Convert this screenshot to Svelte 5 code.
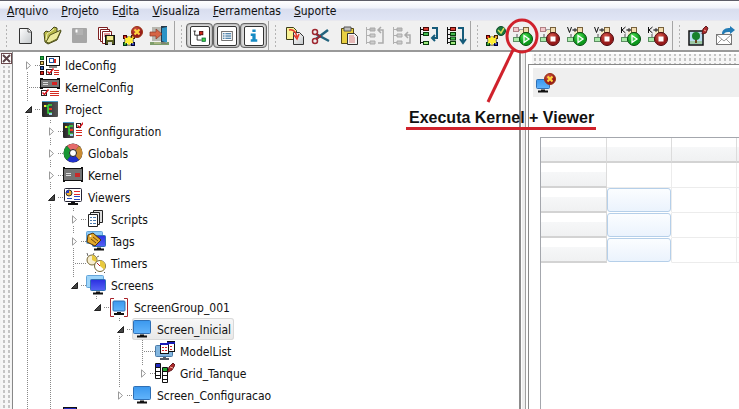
<script>
    const menus = ['Arquivo', 'Projeto', 'Edita', 'Visualiza', 'Ferramentas', 'Suporte'];
    // position of the access key inside each menu title
    const accessKeys = [0, 0, 1, 0, 0, 0];

    const toolGroups = [
        ['new', 'open', 'save', 'saveAll', 'configure', 'exit'],
        ['treeView', 'listView', 'info'],
        ['copy', 'cut', 'paste', 'moveUp', 'moveOut', 'moveIn', 'moveDown'],
        ['verify', 'runAll', 'stopAll', 'runViewer', 'stopViewer', 'runKernel', 'stopKernel'],
        ['editImage', 'send'],
    ];

    let pressed = $state({ treeView: true, listView: true, info: true });
    let selected = $state('Screen_Inicial');

    let tree = $state([
        { name: 'IdeConfig', icon: 'ideConfig', open: false, children: [] },
        { name: 'KernelConfig', icon: 'kernelConfig' },
        { name: 'Project', icon: 'project', open: true, children: [
            { name: 'Configuration', icon: 'configuration', open: false, children: [] },
            { name: 'Globals', icon: 'globals', open: false, children: [] },
            { name: 'Kernel', icon: 'kernel', open: false, children: [] },
            { name: 'Viewers', icon: 'viewers', open: true, children: [
                { name: 'Scripts', icon: 'scripts', open: false, children: [] },
                { name: 'Tags', icon: 'tags', open: false, children: [] },
                { name: 'Timers', icon: 'timers' },
                { name: 'Screens', icon: 'screens', open: true, children: [
                    { name: 'ScreenGroup_001', icon: 'group', open: true, children: [
                        { name: 'Screen_Inicial', icon: 'screen', open: true, children: [
                            { name: 'ModelList', icon: 'modelList' },
                            { name: 'Grid_Tanque', icon: 'grid', open: false, children: [] },
                        ] },
                        { name: 'Screen_Configuracao', icon: 'screen', open: false, children: [] },
                    ] },
                ] },
            ] },
            { name: '', icon: 'database' },
        ] },
        { name: '', icon: 'database' },
    ]);

    const gridRows = [false, true, true, true];

    function togglePressed(name) {
        if (name in pressed) pressed[name] = !pressed[name];
    }
</script>

{#snippet monitor(x, y, w, h, fill)}
    <rect {x} {y} width={w} height={h} rx="1" {fill} stroke="#2f6fb4" />
    <path d="M{x + w / 2 - 2} {y + h + 1}h4v1h3v2h-10v-2h3z" fill="#111" />
{/snippet}

{#snippet badge(x, y)}
    <circle cx={x} cy={y} r="5.5" fill="url(#red)" stroke="#9c3413" />
    <path d="M{x - 2.5} {y - 2.5}l5 5m0-5l-5 5" stroke="#ffd83c" stroke-width="2" />
{/snippet}

{#snippet star()}
    <path d="M3 12h8v8H3z" fill="none" stroke="#222" />
    <rect x="1.5" y="10.5" width="3" height="3" fill="#e32219" stroke="#400" />
    <rect x="9.5" y="10.5" width="3" height="3" fill="#e09a35" stroke="#420" />
    <rect x="1.5" y="17.5" width="3" height="3" fill="#2b9b37" stroke="#031" />
    <rect x="9.5" y="17.5" width="3" height="3" fill="#2638c5" stroke="#003" />
    <path d="M7 10.500l1.500 2.500 3-.5-1 3 1 3-3-.5-1.500 2.500-1.500-2.500-3 .5 1-3-1-3 3 .5z" fill="#ffee32" />
{/snippet}

{#snippet checkbox(x, y, size)}
    <rect {x} {y} width={size} height={size} fill="#fff" stroke="#222" />
    <path d="M{x + 1} {y + 2}l2 2 4-5" fill="none" stroke="#d8141c" stroke-width="1.5" />
{/snippet}

{#snippet board(x, y, w, h)}
    <rect {x} {y} width={w} height={h} rx="1" fill="url(#dark)" />
    <path d="M{x} {y + .5}h{w}" stroke="#4c9bc8" />
    <path d="M{x + 2} {y + 5}h4v7h4m-4-4h3m-3-4h4" fill="none" stroke="#38dc3a" stroke-width="1.5" />
    <path d="M{x + 2} {y + 4}h2v2h-2z" fill="#f6e940" />
    <path d="M{x + 7} {y + 7}h3v2h-3z" fill="#ed3c23" />
    <path d="M{x + 7} {y + 12}h3v2h-3z" fill="#9cd2ee" />
{/snippet}

{#snippet runIcon(letter, stop)}
    <path d="M6 5h7M5 9v5m9-7v6" stroke="#555" fill="none" />
    {#if letter}
        <path d="M8 6h6v8H8z" fill="#f7ecc4" />
        {#if letter === 'V'}
            <path d="M1.500 2l2 5.500 2-5.500" fill="none" stroke="#111" />
        {:else}
            <path d="M1.500 2v6m4-6l-3.500 3 3.500 3" fill="none" stroke="#111" />
        {/if}
        <path d="M7 5h4m-2-2v4" stroke="#333" />
    {:else}
        <rect x="1.5" y="2.5" width="5" height="4" fill="#f3c7cb" stroke="#b07f83" />
        <path d="M8 5h5v9H8z" fill="#f7ecc4" />
    {/if}
    <rect x="11.5" y="2.5" width="5" height="5" fill="#f2dcae" stroke="#76603a" />
    <rect x="1.5" y="12.5" width="6" height="4" fill="#a9eaa9" stroke="#5b8f62" />
    {#if stop}
        <circle cx="14" cy="14" r="6.5" fill="url(#red)" stroke="#4d0a10" />
        <path d="M11.500 11.500h5v5h-5z" fill="#fff" />
    {:else}
        <circle cx="14" cy="14" r="6.5" fill="url(#green)" stroke="#064e10" />
        <path d="M12 10.500l5 3.500-5 3.500z" fill="#41d34b" stroke="#fff" stroke-width="1.3" />
    {/if}
{/snippet}

{#snippet toolIcon(name)}
    <svg width="22" height="22" viewBox="0 0 22 22" aria-hidden="true">
        {#if name === 'new'}
            <path d="M5.500 3.500h9l3 3v12h-12z" fill="url(#paper)" stroke="#333" />
            <path d="M14 3.500v3.500h3.500" fill="#fff" stroke="#555" />
        {:else if name === 'open'}
            <path d="M4 17l-1-9 2-2 3 1 5-5 3 1v4l4-1-4 9-9 4z" fill="#b9ba4a" stroke="#454718" />
            <path d="M5 17l4-7 11-5-4 9-8 4z" fill="#ecea9b" stroke="#55571c" />
            <path d="M5 15l1-6 7-5" fill="none" stroke="#f5f3ba" />
        {:else if name === 'save'}
            <rect x="4" y="3" width="15" height="15" rx="1" fill="#a6a6a6" />
            <path d="M8 4h7v6H8z" fill="#b2b2b2" />
            <path d="M8.500 4.500v3" stroke="#fff" stroke-width="2" />
        {:else if name === 'saveAll'}
            <path d="M3.500 2.500h9v12h-9z" fill="#fff" stroke="#7e2020" />
            <path d="M5.500 4.500h9v12h-9z" fill="#fff" stroke="#7e2020" />
            <path d="M7.500 6.500h9v12h-9z" fill="#fff" stroke="#7e2020" />
            <path d="M9 9h6m-6 2h4" stroke="#c33" />
            <rect x="10.5" y="10.5" width="9" height="9" fill="#555a20" stroke="#111" />
            <path d="M12 11h6v4h-6z" fill="#f1e98c" />
            <path d="M13 17h4v3h-4z" fill="#ddd" />
        {:else if name === 'configure'}
            {@render star()}
            {@render badge(15, 7)}
        {:else if name === 'exit'}
            <path d="M1 17h19v3H1z" fill="#7d9d6b" />
            <path d="M3 2h9v14H3z" fill="#b7b7b0" />
            <path d="M12 1h6v18h-6z" fill="#273848" />
            <path d="M13 3l5-1v16l-5-2z" fill="#2b93c6" />
            <path d="M1 7h6V4l6 5-6 5v-3H1z" fill="#d66445" stroke="#8c3a29" stroke-width=".7" />
            <path d="M5 18h13" stroke="#d3d09a" />
        {:else if name === 'treeView'}
            <path d="M4.500 5v5H12M7.500 10v6H13" fill="none" stroke="#111" />
            <path d="M3 5h3" stroke="#111" />
            <rect x="10.5" y="5.5" width="4" height="4" fill="#cf2318" stroke="#400" />
            <rect x="13.5" y="13.5" width="4" height="4" fill="#45d544" stroke="#063" />
        {:else if name === 'listView'}
            <rect x="4.5" y="5.5" width="13" height="11" fill="#fff" stroke="#555" />
            <path d="M6 8h2m-2 2h2m-2 2h2m-2 2h2M9 8h7m-7 2h7m-7 2h7m-7 2h7" stroke="#286899" />
        {:else if name === 'info'}
            <path d="M9 3h4v3H9zM7 8h6v7h2v3H7v-3h2v-4H7z" fill="#168bc4" />
        {:else if name === 'copy'}
            <path d="M3.500 2.500h7l3 3v9h-10z" fill="#f9f295" stroke="#3e3d18" />
            <path d="M10.500 7.500h6l4 4v8h-10z" fill="url(#paper)" stroke="#333" />
            <path d="M6 5c5-1 7 2 8 7m-3-2l3 4 2-5" fill="none" stroke="#e3392c" stroke-width="1.5" />
        {:else if name === 'cut'}
            <path d="M6 9l13 7M6 14L18 5" stroke="#22637d" stroke-width="2.5" />
            <path d="M6 9l5 3M6 14l5-3" stroke="#9e2730" stroke-width="1.5" />
            <circle cx="5" cy="7" r="2.5" fill="none" stroke="#9e2730" stroke-width="1.5" />
            <circle cx="5" cy="16" r="2.5" fill="none" stroke="#9e2730" stroke-width="1.5" />
        {:else if name === 'paste'}
            <path d="M4.500 3.500h12v15h-12z" fill="#e8cf42" stroke="#554913" />
            <path d="M7 2h7v4H7z" fill="#bdbdbd" stroke="#555" />
            <path d="M10.500 8.500h7l3 3v8h-10z" fill="#f4f4f4" stroke="#333" />
            <path d="M12 11h5m-5 2h6m-6 2h6m-6 2h6" stroke="#d77d7b" />
        {:else if name === 'moveUp' || name === 'moveOut'}
            <path d="M2.500 2v17M3 4.500h3m-3 6h3m-3 7h3" stroke="#b0b0b0" fill="none" />
            <path d="M6 3h5v3H6z" fill="#bbb" stroke="#aaa" />
            <path d="M6 9h5v3H6zM6 16h5v3H6z" fill="#ccc" stroke="#aaa" />
            {#if name === 'moveUp'}
                <path d="M14 18h5V5h-4m2-3l-3 3 3 3" fill="none" stroke="#aaa" stroke-width="1.5" />
            {:else}
                <path d="M15 18h4v-8h-4m2-3l-3 3 3 3" fill="none" stroke="#aaa" stroke-width="1.5" />
            {/if}
        {:else if name === 'moveIn' || name === 'moveDown'}
            <path d="M2.500 2v17M3 4.500h3m-3 5h3m-3 8h3" stroke="#111" fill="none" />
            <rect x="5.5" y="2.5" width="5" height="3" fill="#d63a30" stroke="#4a0805" />
            <rect x="5.5" y="7.500" width="5" height="3" fill="#43b94e" stroke="#063d0a" />
            {#if name === 'moveDown'}
                <path d="M3 13.500h3" stroke="#111" />
                <rect x="5.5" y="12" width="5" height="3" fill="#43b94e" stroke="#063d0a" />
            {/if}
            <rect x="5.5" y="16.5" width="5" height="3" fill="#a0e87d" stroke="#063d0a" />
            <path d={name === 'moveIn' ? 'M14 3h5v10h-4m2-3l-3 3 3 3' : 'M13 3h5v14m-3-3l3 4 3-4'} fill="none" stroke="#155b7a" stroke-width="2" />
        {:else if name === 'verify'}
            {@render star()}
            <circle cx="16" cy="6" r="4.5" fill="#19763b" stroke="#0c4b29" />
            <path d="M13 5l3 3 3-5" fill="none" stroke="#d7df5c" stroke-width="1.5" />
        {:else if name === 'runAll'}
            {@render runIcon('', false)}
        {:else if name === 'stopAll'}
            {@render runIcon('', true)}
        {:else if name === 'runViewer'}
            {@render runIcon('V', false)}
        {:else if name === 'stopViewer'}
            {@render runIcon('V', true)}
        {:else if name === 'runKernel'}
            {@render runIcon('K', false)}
        {:else if name === 'stopKernel'}
            {@render runIcon('K', true)}
        {:else if name === 'editImage'}
            <rect x="2" y="6" width="14" height="14" fill="#b8dcf0" stroke="#111" stroke-width="1.5" />
            <path d="M3 16h12v3H3z" fill="#9cc9a4" />
            <path d="M8 12h2v6H8z" fill="#67451d" />
            <circle cx="9" cy="11" r="4" fill="#16812c" />
            <path d="M15 9l1-5 3-3 2 2-2 5z" fill="#ad2b2c" stroke="#631c20" />
            <path d="M17 5l2 1" stroke="#f0b0a0" />
        {:else if name === 'send'}
            <rect x="2.5" y="9.5" width="15" height="10" fill="#fff" stroke="#777" />
            <path d="M3 10l7 6 7-6M3 19l5-5m9 5l-5-5" fill="none" stroke="#999" />
            <path d="M8 9c0-5 4-6 8-6V1l5 4-5 4V7c-3 0-5 0-6 2z" fill="#247cb5" />
        {/if}
    </svg>
{/snippet}

{#snippet treeIcon(name)}
    <svg width="20" height="22" viewBox="0 0 20 22" aria-hidden="true">
        {#if name === 'ideConfig'}
            <rect x=".5" y="2.5" width="3" height="3" fill="#2aa636" stroke="#062" />
            <rect x=".5" y="7.5" width="3" height="3" fill="#e2c765" stroke="#431" />
            <rect x=".5" y="12.5" width="3" height="3" fill="#3a60b0" stroke="#013" />
            <rect x=".5" y="17.5" width="3" height="3" fill="#d32a20" stroke="#400" />
            <rect x="6.5" y="2.5" width="13" height="9" fill="#fff" stroke="#111" />
            <rect x="9.5" y="4.5" width="4" height="4" fill="#fff" stroke="#2355a0" />
            <path d="M14 5h2v4h-2z" fill="#d32a20" />
            <path d="M9 13h8" stroke="#111" />
            {@render checkbox(6.5, 15.5, 5)}
            <path d="M14 16.500h5m-5 2h5m-5 2h5" stroke="#d32a20" />
        {:else if name === 'kernelConfig'}
            <rect x=".5" y="3.5" width="19" height="8" fill="#777" stroke="#111" />
            <path d="M0 3h3M0 12h3m14-9h3m-3 9h3" stroke="#111" stroke-width="2" />
            <path d="M3 6.500h5m-5 2h5" stroke="#ddd" />
            <path d="M12 6h5v3h-5z" fill="#d42222" />
            {@render checkbox(1.5, 14.5, 5)}
            <path d="M10 15.500h9m-9 2h9m-9 2h9" stroke="#d32a20" />
        {:else if name === 'project'}
            {@render board(2, 3, 16, 16)}
        {:else if name === 'configuration'}
            {@render board(0, 2, 11, 16)}
            {@render checkbox(13.5, 3.5, 4)}
            <path d="M13 10.500h6m-6 2h6m-6 3h6" stroke="#d32a20" />
        {:else if name === 'globals'}
            <circle cx="10" cy="11" r="9.5" fill="#222" />
            <path d="M10 11L4 4a9 9 0 0 1 12 0z" fill="#e56b6b" />
            <path d="M10 11l6-7a9 9 0 0 1 0 14z" fill="#c98b32" />
            <path d="M10 11l6 7a9 9 0 0 1-12 0z" fill="#2030cd" />
            <path d="M10 11l-6 7a9 9 0 0 1 0-14z" fill="#189634" />
            <circle cx="10" cy="11" r="3.5" fill="#fff" stroke="#222" />
        {:else if name === 'kernel'}
            <rect x=".5" y="4.5" width="19" height="12" fill="#747474" stroke="#111" />
            <path d="M0 4h2m-2 13h2M18 4h2m-2 13h2" stroke="#111" stroke-width="2" />
            <path d="M3 9.500h5m-5 2h5" stroke="#ddd" />
            <path d="M12 9h5v4h-5z" fill="#c72a2a" />
        {:else if name === 'viewers'}
            <rect x="1.5" y="2.5" width="17" height="13" rx="1" fill="#fff" stroke="#223" />
            <circle cx="6" cy="7" r="3" fill="#f0ae36" stroke="#333" />
            <path d="M6 7V4a3 3 0 0 0-3 3z" fill="#213bc7" />
            <path d="M11 5.500h6m-6 3h6" stroke="#e32a32" />
            <path d="M4 12.500h5m2-2h6m-6 3h6" stroke="#2748c4" />
            <path d="M8 16h4v1h3v2H5v-2h3z" fill="#111" />
        {:else if name === 'scripts'}
            <path d="M7.500 2.500h9v12h-9z" fill="#ddd" stroke="#222" />
            <path d="M4.500 4.500h9v12h-9z" fill="#eee" stroke="#222" />
            <path d="M2.500 6.500h9v12h-9z" fill="#fff" stroke="#222" />
            <path d="M4 9.500h2m1 0h3m-6 3h2m1 0h3m-6 3h2m1 0h3" stroke="#4a7aad" />
        {:else if name === 'tags'}
            <rect x=".5" y="1.5" width="16" height="12" rx="1" fill="#8dcbf8" stroke="#64a5d9" />
            {@render monitor(6.5, 5.5, 13, 11, 'url(#blue)')}
            <path d="M1 12l1-7 5-2 8 7-6 6z" fill="#e3a92d" stroke="#513309" />
            <path d="M5 9l5 4m-3-6l5 4" stroke="#71480c" />
            <circle cx="4.5" cy="6" r="1" fill="#fff" />
        {:else if name === 'timers'}
            <circle cx="6" cy="8" r="5" fill="#f6edcf" stroke="#776735" />
            <path d="M6 8V3a5 5 0 0 1 4 7z" fill="#e8c93d" />
            <path d="M2 4L1 1m6 2l1-2m3 4l2-1" stroke="#666" />
            <circle cx="14" cy="14" r="5.5" fill="#fff" stroke="#776735" />
            <path d="M14 14V8.500a5.500 5.500 0 0 1 4 9z" fill="#e8c93d" />
            <path d="M14 14l-3-3" stroke="#b22" />
            <path d="M10 20l-1 1m9-1l1 1" stroke="#555" />
        {:else if name === 'screens'}
            <rect x=".5" y="1.5" width="17" height="12" rx="1" fill="#9ed5fa" stroke="#64a5d9" />
            {@render monitor(4.5, 5.5, 15, 11, 'url(#blue)')}
        {:else if name === 'group'}
            <path d="M5 2.500H1.500v18H5M15 2.500h3.500v18H15" fill="none" stroke="#a9232a" />
            {@render monitor(4, 5, 12, 10, 'url(#sky)')}
        {:else if name === 'screen'}
            {@render monitor(1.5, 2.5, 17, 13, 'url(#sky)')}
        {:else if name === 'modelList'}
            <rect x=".5" y="5.5" width="17" height="11" rx="1" fill="#83b6df" stroke="#497aa9" />
            <path d="M8 17h3v1h3v2H5v-2h3z" fill="#555b65" />
            <rect x="12.5" y="1.5" width="7" height="10" fill="#fff" stroke="#111" />
            <path d="M12 2h8v2h-8z" fill="#1b1bb7" />
            <rect x="5.5" y="3.5" width="8" height="10" fill="#fff" stroke="#111" />
            <path d="M5 3h9v2H5z" fill="#1b1bb7" />
            <path d="M7 7.500h5m-5 3h5m3-4h3m-3 3h3" stroke="#d5252a" stroke-dasharray="2 1" />
        {:else if name === 'grid'}
            <path d="M.5 1.500h5v15h-5zM7.500 5.500h5v15h-5z" fill="#fff" stroke="#111" />
            <path d="M1 2h4v3H1z" fill="#2029be" />
            <path d="M8 6h4v3H8z" fill="#23a52f" />
            <path d="M1 5.500h5m-5 4h5m-5 4h5m2-4h5m-5 4h5m-5 4h5" stroke="#111" />
            <path d="M13 10l1-5 4-4 2 2-3 5z" fill="#ad2b2c" stroke="#631c20" />
            <path d="M15 5l3 1" stroke="#f0b0a0" />
        {:else if name === 'database'}
            <rect x=".5" y="1.5" width="13" height="16" fill="#1e27bd" stroke="#111" />
        {/if}
    </svg>
{/snippet}

{#snippet branch(nodes, guides)}
    <ul>
        {#each nodes as node, i}
            {@const last = i === nodes.length - 1}
            <li>
                <div class="row">
                    {#each guides as guide}
                        <span class="cell" class:guide></span>
                    {/each}
                    {#if node.children}
                        <button
                            class="cell expander"
                            class:first={i === 0 && guides.length === 0}
                            class:last
                            aria-label="Expand {node.name}"
                            aria-expanded={node.open}
                            onclick={() => node.open = !node.open}
                        >
                            <svg width="7" height="9" viewBox="0 0 7 9" aria-hidden="true">
                                {#if node.open}
                                    <path d="M6.500 1.500v6h-6z" fill="#444" stroke="#222" />
                                {:else}
                                    <path d="M1.500 .8v7.400l4-3.700z" fill="#fff" stroke="#999" />
                                {/if}
                            </svg>
                        </button>
                    {:else}
                        <span class="cell leaf" class:last></span>
                    {/if}
                    <button
                        class="item"
                        class:selected={node.name === selected}
                        aria-label={node.name || 'Item'}
                        onclick={() => selected = node.name}
                    >
                        {@render treeIcon(node.icon)}
                        <span>{node.name}</span>
                    </button>
                </div>
                {#if node.open && node.children.length}
                    {@render branch(node.children, [...guides, !last])}
                {/if}
            </li>
        {/each}
    </ul>
{/snippet}

<svg class="defs" width="0" height="0" aria-hidden="true">
    <defs>
        <linearGradient id="paper" x2="1" y2="1"><stop stop-color="#fff" /><stop offset="1" stop-color="#c3c7ca" /></linearGradient>
        <linearGradient id="sky" x2="0" y2="1"><stop stop-color="#3b98ee" /><stop offset="1" stop-color="#62b4fb" /></linearGradient>
        <linearGradient id="blue" x2="0" y2="1"><stop stop-color="#2a2fe0" /><stop offset="1" stop-color="#5663f5" /></linearGradient>
        <linearGradient id="dark" x2="1" y2="0"><stop stop-color="#222" /><stop offset="1" stop-color="#555" /></linearGradient>
        <radialGradient id="red" cx=".4" cy=".3"><stop stop-color="#d8594c" /><stop offset="1" stop-color="#971a1a" /></radialGradient>
        <radialGradient id="green" cx=".4" cy=".3"><stop stop-color="#4fe354" /><stop offset="1" stop-color="#0d9a1d" /></radialGradient>
    </defs>
</svg>

<div class="window">
    <nav class="menubar">
        {#each menus as menu, i}
            <button>{menu.slice(0, accessKeys[i])}<u>{menu[accessKeys[i]]}</u>{menu.slice(accessKeys[i] + 1)}</button>
        {/each}
    </nav>

    <div class="toolbar" role="toolbar" aria-label="Tools">
        {#each toolGroups as group}
            <div class="group">
                <span class="handle"></span>
                {#each group as name}
                    <button
                        class="tool"
                        class:pressed={pressed[name]}
                        aria-label={name}
                        onclick={() => togglePressed(name)}
                    >
                        {@render toolIcon(name)}
                    </button>
                {/each}
            </div>
        {/each}
    </div>

    <main>
        <section class="explorer">
            <div class="dock">
                <button class="close" aria-label="Close panel">
                    <svg width="11" height="11" viewBox="0 0 11 11" aria-hidden="true">
                        <rect x=".5" y=".5" width="10" height="10" fill="#fff" stroke="#6b4a4e" />
                        <path d="M2 2l7 7m0-7l-7 7" stroke="#5c4347" stroke-width="2" />
                    </svg>
                </button>
                <div class="dots"></div>
            </div>
            <div class="tree">
                {@render branch(tree, [])}
            </div>
        </section>

        <div class="splitter"></div>

        <section class="editor">
            <div class="dots"></div>
            <div class="document">
                <div class="docbar">
                    <button class="tool" aria-label="Close screen">
                        <svg width="22" height="22" viewBox="0 0 22 22" aria-hidden="true">
                            {@render monitor(1.5, 7.5, 13, 9, 'url(#sky)')}
                            {@render badge(15, 7)}
                        </svg>
                    </button>
                </div>
                <div class="sheet">
                    <table aria-label="Grid">
                        <thead>
                            <tr><th class="corner"></th><th></th><th></th><th></th></tr>
                        </thead>
                        <tbody>
                            {#each gridRows as active}
                                <tr>
                                    <th></th>
                                    <td class:active><div></div></td>
                                    <td></td>
                                    <td></td>
                                </tr>
                            {/each}
                        </tbody>
                    </table>
                </div>
            </div>
        </section>
    </main>

    <!-- callout over the run button -->
    <div class="callout">
        <svg width="190" height="88" viewBox="0 0 190 88" fill="none" stroke="#d0222c" stroke-width="3" aria-hidden="true">
            <ellipse cx="116" cy="18" rx="15" ry="16" />
            <path d="M107 32L82 84" />
        </svg>
        <p>Executa Kernel + Viewer</p>
    </div>
</div>

<style>
    :global(body) {
        margin: 0;
        overflow: hidden;
    }
    .defs {
        position: absolute;
    }
    .window {
        position: relative;
        display: flex;
        flex-direction: column;
        height: 100vh;
        overflow: hidden;
        background: #fff;
        color: #111;
        font: 12px/18px "DejaVu Sans Condensed", "Noto Sans", sans-serif;
    }
    button {
        margin: 0;
        padding: 0;
        border: 0;
        background: none;
        color: inherit;
        font: inherit;
    }
    svg {
        display: block;
        flex: none;
    }
    .menubar {
        display: flex;
        height: 19px;
        border-top: 1px solid #5d5d68;
        border-bottom: 1px solid #e8e8ee;
        background: linear-gradient(#fff 0, #f1f3fa 35%, #d9deef 45%, #e0e5f5 100%);
    }
    .menubar button {
        padding: 1px 6px 0 7px;
    }
    .toolbar {
        display: flex;
        height: 29px;
        border-bottom: 2px solid #999;
        background: #f0f0f0;
    }
    .group {
        display: flex;
        align-items: center;
        padding-right: 1px;
        border-right: 1px solid #a5a5a5;
    }
    .group:last-child {
        border-right: 0;
    }
    .handle {
        width: 3px;
        height: 23px;
        margin: 0 4px;
        background: conic-gradient(from 90deg at 2px 2px, transparent 75%, #b4b4b4 0) 0 1px / 3px 4px;
    }
    .tool {
        display: flex;
        align-items: center;
        justify-content: center;
        width: 27px;
        height: 27px;
    }
    .pressed {
        box-sizing: border-box;
        height: 25px;
        border: 1px solid #666;
        border-radius: 4px;
        background: #dcdcdc;
        box-shadow: inset 0 0 2px #777;
    }
    .pressed svg {
        width: 18px;
        height: 18px;
        border: 1px solid #333;
        border-radius: 2px;
        background: #fff;
    }
    main {
        display: flex;
        flex: 1;
        min-height: 0;
    }
    .explorer {
        display: flex;
        flex: 520 1 0;
        min-width: 0;
        overflow: hidden;
    }
    .dock {
        display: flex;
        flex-direction: column;
        width: 12px;
        border-right: 1px solid #888;
        background: #f3f3f3;
    }
    .close {
        padding: 1px 0 0 1px;
    }
    .dots {
        background: conic-gradient(from 90deg at 3px 3px, #f6f6f6 75%, #c4c4c4 0) -1px -1px / 5px 5px;
    }
    .dock .dots {
        flex: 1;
        margin: 2px 1px 0;
    }
    .tree {
        flex: 1;
        min-width: 0;
        padding: 2px 0 0 4px;
        background: #fff;
    }
    ul {
        margin: 0;
        padding: 0;
        list-style: none;
    }
    .row {
        display: flex;
        height: 22px;
    }
    .cell {
        --down: repeating-linear-gradient(#888 0 1px, transparent 1px 2px);
        --across: repeating-linear-gradient(90deg, #888 0 1px, transparent 1px 2px);
        display: flex;
        flex: none;
        align-items: center;
        justify-content: center;
        width: 23px;
        height: 22px;
        background-repeat: no-repeat;
    }
    .guide {
        background: var(--down) 10px 0 / 1px 22px no-repeat;
    }
    .expander {
        background:
            var(--down) 10px 0 / 1px 4px no-repeat,
            var(--down) 10px 18px / 1px 4px no-repeat,
            var(--across) 18px 11px / 5px 1px no-repeat;
    }
    .expander.last {
        background:
            var(--down) 10px 0 / 1px 4px no-repeat,
            var(--across) 18px 11px / 5px 1px no-repeat;
    }
    .expander.first {
        background:
            var(--down) 10px 18px / 1px 4px no-repeat,
            var(--across) 18px 11px / 5px 1px no-repeat;
    }
    .leaf {
        background:
            var(--down) 10px 0 / 1px 22px no-repeat,
            var(--across) 12px 11px / 11px 1px no-repeat;
    }
    .leaf.last {
        background:
            var(--down) 10px 0 / 1px 12px no-repeat,
            var(--across) 12px 11px / 11px 1px no-repeat;
    }
    .item {
        display: flex;
        align-items: center;
        gap: 5px;
        padding-right: 3px;
        white-space: nowrap;
    }
    .item span {
        padding-top: 1px;
    }
    .selected {
        border-radius: 3px;
        background: linear-gradient(#f8f8f8, #e8e8e8);
        box-shadow: inset 0 0 0 1px #d9d9d9;
    }
    .splitter {
        width: 4px;
        border-left: 2px solid #8c8c8c;
        border-right: 1px solid #a0a0a0;
        background: linear-gradient(90deg, #fff 25%, #eee 25%);
    }
    .editor {
        display: flex;
        flex: 212 1 0;
        flex-direction: column;
        min-width: 0;
        padding-left: 2px;
    }
    .editor > .dots {
        height: 10px;
        margin: 2px 0 0 4px;
    }
    .document {
        display: flex;
        flex: 1;
        flex-direction: column;
        min-height: 0;
        border-top: 1px solid #888;
        border-left: 1px solid #888;
    }
    .docbar {
        margin: 3px 0 0 4px;
        padding: 1px 0;
        background: #efefef;
    }
    .sheet {
        flex: 1;
        min-height: 0;
        margin: 40px 0 0 11px;
        overflow: hidden;
        border-top: 1px solid #a4a7ad;
        border-left: 1px solid #a4a7ad;
    }
    table {
        width: 261px;
        table-layout: fixed;
        border-collapse: separate;
        border-spacing: 0;
    }
    .corner {
        width: 66px;
    }
    th,
    td {
        box-sizing: border-box;
        height: 25px;
        padding: 0;
        border-right: 1px solid #ececec;
        border-bottom: 1px solid #ececec;
    }
    th {
        border-right-color: #dcdcdc;
        border-bottom: 2px solid #d3d3d3;
        background: linear-gradient(#fff 40%, #f6f7f8 40%, #f0f1f2);
    }
    .active {
        border-bottom-color: #fff;
    }
    .active div {
        box-sizing: border-box;
        height: 24px;
        border: 1px solid #b5cfe9;
        border-radius: 3px;
        background: linear-gradient(#fbfdff, #ebf3fd);
    }
    .callout {
        position: absolute;
        top: 18px;
        left: 406px;
        pointer-events: none;
    }
    .callout p {
        margin: 0;
        padding: 3px 2px 0 3px;
        border-bottom: 3px solid #d0222c;
        font: bold 16px/18px "Liberation Sans", Arial, sans-serif;
        white-space: nowrap;
    }
</style>
